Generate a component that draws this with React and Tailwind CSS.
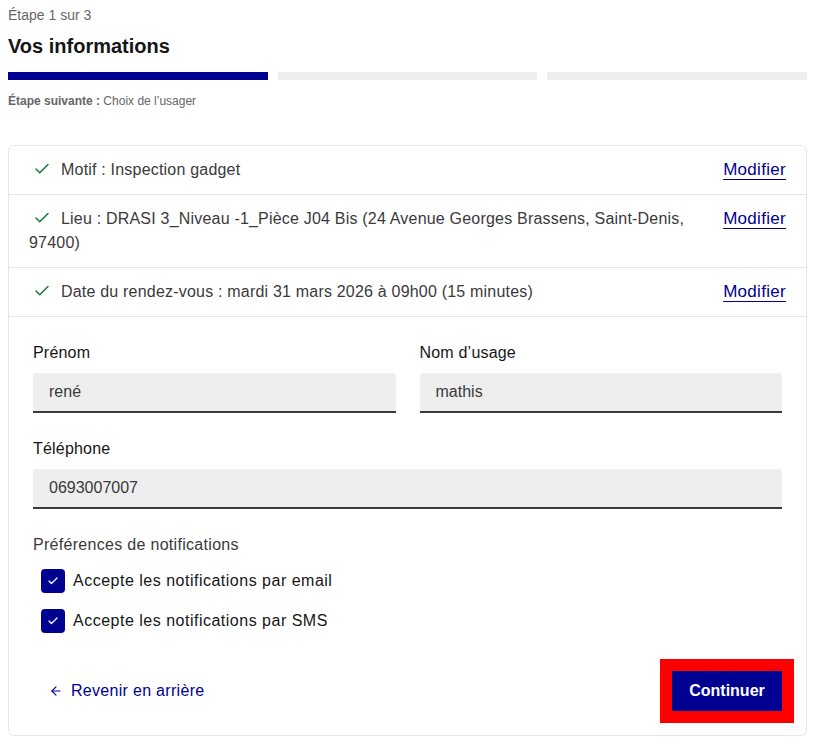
import { Check, ArrowLeft } from 'lucide-react'

const font = { fontFamily: '"Liberation Sans", Arial, sans-serif' }

function SummaryRow({ children, last }) {
  return (
    <div className={`flex items-start justify-between gap-4 py-3 pl-5 pr-5 ${last ? '' : 'border-b border-[#e3e7ec]'}`}>
      <p className="text-base leading-6 tracking-[0.2px] text-[#3a3a3a]">
        <Check size={18} strokeWidth={2} className="inline-block text-[#18753c] ml-[4px] mr-[5px] -mt-1" />
        <span className="ml-[5px]">{children}</span>
      </p>
      <a href="#" className="text-[17px] leading-6 tracking-[0.3px] text-[#000091] underline underline-offset-4 decoration-1 shrink-0">
        Modifier
      </a>
    </div>
  )
}

function Field({ label, value, className = '' }) {
  return (
    <div className={className}>
      <label className="block text-base leading-6 tracking-[0.2px] text-[#161616] mb-2">{label}</label>
      <div className="h-10 bg-[#eeeeee] rounded-t border-b-2 border-[#3a3a3a] px-4 flex items-center text-base text-[#3a3a3a]">
        {value}
      </div>
    </div>
  )
}

function Checkbox({ label }) {
  return (
    <div className="flex items-center gap-2 ml-2">
      <span className="w-6 h-6 rounded bg-[#000091] flex items-center justify-center">
        <Check size={12} strokeWidth={2.5} className="text-white" />
      </span>
      <span className="text-base leading-6 tracking-[0.5px] text-[#161616]">{label}</span>
    </div>
  )
}

export default function App() {
  return (
    <div style={font} className="px-2 pt-[5px] bg-white min-h-screen">
      <p className="text-sm leading-5 text-[#666]">Étape 1 sur 3</p>
      <h1 className="mt-[7px] text-xl leading-7 font-bold text-[#161616]">Vos informations</h1>

      <div className="mt-3 flex gap-[10px]">
        <div className="h-2 flex-1 bg-[#000091]" />
        <div className="h-2 flex-1 bg-[#eeeeee]" />
        <div className="h-2 flex-1 bg-[#eeeeee]" />
      </div>

      <p className="mt-[11px] text-xs leading-5 text-[#666]">
        <span className="font-bold">Étape suivante :</span> Choix de l’usager
      </p>

      <div className="mt-[34px] border border-[#e3e7ec] rounded-md">
        <SummaryRow>Motif : Inspection gadget</SummaryRow>
        <SummaryRow>
          Lieu : DRASI 3_Niveau -1_Pièce J04 Bis (24 Avenue Georges Brassens, Saint-Denis, 97400)
        </SummaryRow>
        <div className="border-b border-[#e3e7ec]">
          <SummaryRow last>Date du rendez-vous : mardi 31 mars 2026 à 09h00 (15 minutes)</SummaryRow>
        </div>

        <div className="px-6 pt-6 pb-6">
          <div className="grid grid-cols-2 gap-6">
            <Field label="Prénom" value="rené" />
            <Field label="Nom d’usage" value="mathis" />
          </div>
          <Field className="mt-6" label="Téléphone" value="0693007007" />

          <p className="mt-6 text-base leading-6 tracking-[0.3px] text-[#3a3a3a]">Préférences de notifications</p>
          <div className="mt-3 flex flex-col gap-4">
            <Checkbox label="Accepte les notifications par email" />
            <Checkbox label="Accepte les notifications par SMS" />
          </div>

          <div className="mt-[38px] flex items-center justify-between">
            <a href="#" className="flex items-center gap-2 ml-4 text-base tracking-[0.3px] font-medium text-[#000091]">
              <ArrowLeft size={14} strokeWidth={2} />
              Revenir en arrière
            </a>
            <button className="h-10 w-[110px] bg-[#000091] text-white text-base font-bold outline outline-[12px] outline-[#ff0000]">
              Continuer
            </button>
          </div>
        </div>
      </div>
    </div>
  )
}
